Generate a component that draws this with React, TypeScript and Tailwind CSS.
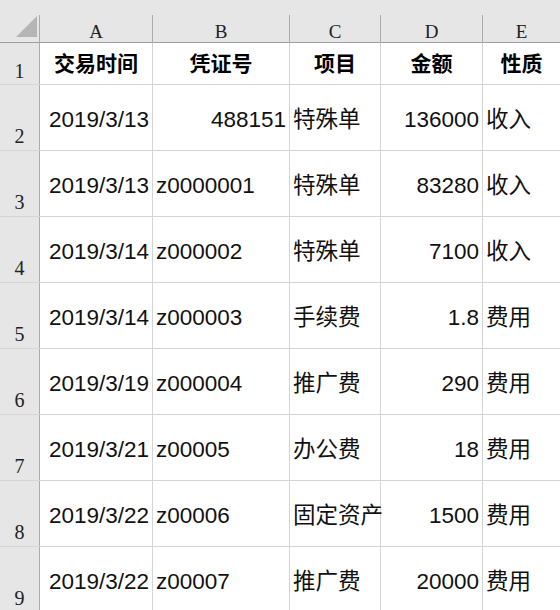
const cols = ['A', 'B', 'C', 'D', 'E'];

type Cell = { v: string; align: 'l' | 'r' };

const rows: Cell[][] = [
  [{ v: '2019/3/13', align: 'r' }, { v: '488151', align: 'r' }, { v: '特殊单', align: 'l' }, { v: '136000', align: 'r' }, { v: '收入', align: 'l' }],
  [{ v: '2019/3/13', align: 'r' }, { v: 'z0000001', align: 'l' }, { v: '特殊单', align: 'l' }, { v: '83280', align: 'r' }, { v: '收入', align: 'l' }],
  [{ v: '2019/3/14', align: 'r' }, { v: 'z000002', align: 'l' }, { v: '特殊单', align: 'l' }, { v: '7100', align: 'r' }, { v: '收入', align: 'l' }],
  [{ v: '2019/3/14', align: 'r' }, { v: 'z000003', align: 'l' }, { v: '手续费', align: 'l' }, { v: '1.8', align: 'r' }, { v: '费用', align: 'l' }],
  [{ v: '2019/3/19', align: 'r' }, { v: 'z000004', align: 'l' }, { v: '推广费', align: 'l' }, { v: '290', align: 'r' }, { v: '费用', align: 'l' }],
  [{ v: '2019/3/21', align: 'r' }, { v: 'z00005', align: 'l' }, { v: '办公费', align: 'l' }, { v: '18', align: 'r' }, { v: '费用', align: 'l' }],
  [{ v: '2019/3/22', align: 'r' }, { v: 'z00006', align: 'l' }, { v: '固定资产', align: 'l' }, { v: '1500', align: 'r' }, { v: '费用', align: 'l' }],
  [{ v: '2019/3/22', align: 'r' }, { v: 'z00007', align: 'l' }, { v: '推广费', align: 'l' }, { v: '20000', align: 'r' }, { v: '费用', align: 'l' }],
];

const titles = ['交易时间', '凭证号', '项目', '金额', '性质'];

const grid = 'grid grid-cols-[40px_113px_137px_91px_102px_1fr]';
const serif = 'font-["Liberation_Serif","Noto_Sans_CJK_SC",serif]';
const sans = 'font-["Liberation_Sans","Noto_Sans_CJK_SC",sans-serif]';

export default function App() {
  return (
    <div className="w-[560px] h-[610px] overflow-hidden bg-white">
      <div className="h-[15px] bg-[#e6e6e6]" />
      <div className={`${grid} h-[28px] bg-[#e6e6e6] border-b border-[#9e9e9e]`}>
        <div className="relative border-r border-[#ababab]">
          <svg className="absolute left-[16px] top-[1px]" width="21" height="21" viewBox="0 0 21 21">
            <polygon points="0,21 21,21 21,0" fill="#b5b5b5" />
          </svg>
        </div>
        {cols.map((c) => (
          <div
            key={c}
            className={`${serif} flex items-center justify-center pt-[3px] text-[19px] text-[#222] border-r border-[#ababab] last:border-r-0`}
          >
            {c}
          </div>
        ))}
      </div>

      <div className={`${grid} h-[42px] border-b border-[#d4d4d4]`}>
        <div className={`${serif} flex items-end justify-center pb-[1px] text-[20px] leading-[24px] text-[#222] bg-[#e6e6e6] border-r border-[#ababab]`}>
          1
        </div>
        {titles.map((t) => (
          <div
            key={t}
            className={`${sans} flex items-center justify-center font-bold text-[21px] text-black border-r border-[#d4d4d4] last:border-r-0`}
          >
            {t}
          </div>
        ))}
      </div>

      {rows.map((r, i) => (
        <div key={i} className={`${grid} h-[66px] border-b border-[#d4d4d4]`}>
          <div className={`${serif} flex items-end justify-center pb-[2px] text-[20px] leading-[24px] text-[#222] bg-[#e6e6e6] border-r border-[#ababab]`}>
            {i + 2}
          </div>
          {r.map((c, j) => (
            <div
              key={j}
              className={`${sans} flex items-center pt-[4px] text-[22.5px] text-[#111] whitespace-nowrap overflow-visible border-r border-[#d4d4d4] last:border-r-0 ${
                c.align === 'r' ? 'justify-end pr-[3px]' : 'justify-start pl-[3px]'
              }`}
            >
              {c.v}
            </div>
          ))}
        </div>
      ))}
    </div>
  );
}
